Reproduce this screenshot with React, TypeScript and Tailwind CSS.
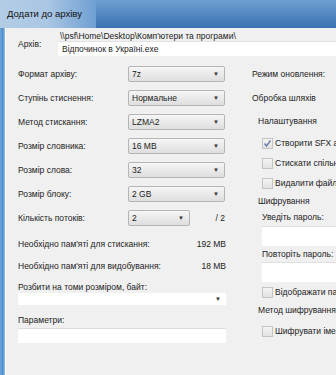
import React from "react"

const font = { fontFamily: '"Liberation Sans", Arial, sans-serif' }

function Select({ value, w = "w-[97px]" }: { value: string; w?: string }) {
  return (
    <div
      className={`${w} h-[16px] flex items-center justify-between pl-[3px] pr-[5px] border border-[#b5b5b5] rounded-[2px] bg-gradient-to-b from-[#f6f6f6] to-[#dedede]`}
    >
      <span>{value}</span>
      <span className="text-[6px] leading-none text-[#333]">▼</span>
    </div>
  )
}

function Check({ checked = false, label }: { checked?: boolean; label: string }) {
  return (
    <div className="flex items-center gap-[2px] pl-[10px] whitespace-nowrap">
      <div className="w-[11px] h-[11px] shrink-0 border border-[#c4c4c4] bg-gradient-to-b from-[#f4f4f4] to-[#e2e2e2] flex items-center justify-center">
        {checked && (
          <svg width="9" height="9" viewBox="0 0 9 9">
            <path d="M1.5 4.5 L3.5 7 L7.5 1.5" stroke="#6c7fa8" strokeWidth="1.4" fill="none" />
          </svg>
        )}
      </div>
      <span>{label}</span>
    </div>
  )
}

const rows = [
  ["Формат архіву:", "7z"],
  ["Ступінь стиснення:", "Нормальне"],
  ["Метод стискання:", "LZMA2"],
  ["Розмір словника:", "16 MB"],
  ["Розмір слова:", "32"],
  ["Розмір блоку:", "2 GB"],
]

export default function App() {
  return (
    <div className="w-[336px] h-[375px] overflow-hidden flex flex-col text-[8.5px] text-[#222]" style={font}>
      {/* title bar */}
      <div className="h-[28px] shrink-0 flex items-center bg-gradient-to-b from-[#6f9fd2] to-[#3a71b0]">
        <div className="h-full flex items-center pl-[7px] pr-[14px] bg-gradient-to-r from-[#b4cde6] via-[#a9c6e4] to-[#6f9fd2]">
          <span className="text-[9.5px] text-[#111]">Додати до архіву</span>
        </div>
      </div>

      <div className="flex flex-1 min-h-0">
        {/* left frame */}
        <div className="w-[6px] shrink-0 bg-gradient-to-r from-[#6fa8da] via-[#4f8fcb] to-[#8ec0e8] border-r border-white" />

        <div className="flex-1 bg-[#f0f0f0] flex flex-col">
          {/* archive */}
          <div className="flex pl-[12px] pt-[2px] h-[32px]">
            <div className="w-[40px] pt-[8px]">Архів:</div>
            <div className="flex-1 flex flex-col">
              <div className="pl-[2px] h-[11px] whitespace-nowrap">\\psf\Home\Desktop\Комп'ютери та програми\</div>
              <div className="h-[15px] bg-white border-t border-[#e3e3e3] flex items-center pl-[4px] whitespace-nowrap">
                Відпочинок в Україні.exe
              </div>
            </div>
          </div>

          <div className="flex flex-1 pt-[2px]">
            {/* left column */}
            <div className="w-[234px] shrink-0 pl-[12px] flex flex-col">
              {rows.map(([label, value]) => (
                <div key={label} className="h-[24px] flex items-center">
                  <div className="w-[110px]">{label}</div>
                  <Select value={value} />
                </div>
              ))}
              <div className="h-[24px] flex items-center">
                <div className="w-[110px]">Кількість потоків:</div>
                <Select value="2" w="w-[62px]" />
                <div className="w-[35px] text-right">/ 2</div>
              </div>
              <div className="h-[22px] mt-[3px] flex items-center justify-between w-[208px]">
                <span>Необхідно пам'яті для стискання:</span>
                <span>192 MB</span>
              </div>
              <div className="h-[22px] flex items-center justify-between w-[208px]">
                <span>Необхідно пам'яті для видобування:</span>
                <span>18 MB</span>
              </div>
              <div className="h-[12px] mt-[4px] flex items-center">Розбити на томи розміром, байт:</div>
              <div className="w-[208px] h-[12px] bg-white flex items-center justify-end pr-[5px]">
                <span className="text-[6px] leading-none text-[#333]">▼</span>
              </div>
              <div className="h-[12px] mt-[9px] flex items-center">Параметри:</div>
              <div className="w-[208px] h-[15px] mt-[2px] bg-white border-t border-[#dcdcdc]" />
            </div>

            {/* right column */}
            <div className="flex-1 pl-[12px] flex flex-col whitespace-nowrap overflow-hidden">
              <div className="h-[24px] flex items-center">Режим оновлення:</div>
              <div className="h-[24px] flex items-center">Обробка шляхів</div>
              <div className="h-[23px] flex items-center pl-[6px]">Налаштування</div>
              <div className="h-[20px] flex items-center">
                <Check checked label="Створити SFX архів" />
              </div>
              <div className="h-[20px] flex items-center">
                <Check label="Стискати спільні файли" />
              </div>
              <div className="h-[20px] flex items-center">
                <Check label="Видалити файли після стиснення" />
              </div>
              <div className="h-[16px] flex items-center pl-[6px]">Шифрування</div>
              <div className="h-[16px] flex items-center pl-[10px]">Уведіть пароль:</div>
              <div className="ml-[10px] mt-[1px] h-[20px] bg-white border-t border-[#e0e0e0]" />
              <div className="h-[16px] flex items-center pl-[10px]">Повторіть пароль:</div>
              <div className="ml-[10px] h-[20px] bg-white border-t border-[#e0e0e0]" />
              <div className="h-[20px] flex items-center">
                <Check label="Відображати пароль" />
              </div>
              <div className="h-[16px] flex items-center pl-[6px]">Метод шифрування:</div>
              <div className="h-[26px] flex items-center">
                <Check label="Шифрувати імена файлів" />
              </div>
            </div>
          </div>
        </div>
      </div>
    </div>
  )
}
